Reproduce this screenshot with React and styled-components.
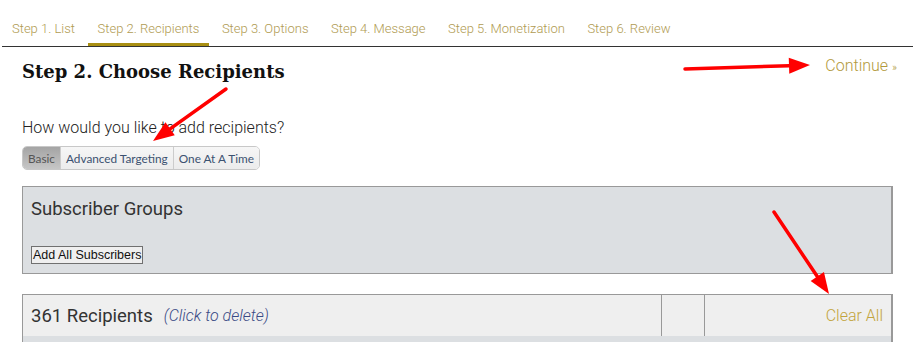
import styled, { createGlobalStyle } from "styled-components";

const GlobalStyle = createGlobalStyle`
  body {
    margin: 0;
    background: #ffffff;
    font-family: Roboto, "Liberation Sans", sans-serif;
  }
`;

const steps = [
  "Step 1. List",
  "Step 2. Recipients",
  "Step 3. Options",
  "Step 4. Message",
  "Step 5. Monetization",
  "Step 6. Review",
];

const arrows = [
  { from: [685, 69], to: [810, 65] },
  { from: [226, 89], to: [153, 141] },
  { from: [774, 212], to: [829, 294] },
];

function arrowHead(from, to, len = 21, half = 8) {
  const dx = to[0] - from[0];
  const dy = to[1] - from[1];
  const d = Math.hypot(dx, dy);
  const ux = dx / d;
  const uy = dy / d;
  const bx = to[0] - ux * len;
  const by = to[1] - uy * len;
  return {
    base: [bx, by],
    points: `${to[0]},${to[1]} ${bx - uy * half},${by + ux * half} ${bx + uy * half},${by - ux * half}`,
  };
}

export default function App() {
  return (
    <>
      <GlobalStyle />
      <Page>
        <TabBar>
          {steps.map((s, i) => (
            <Tab key={s} $active={i === 1}>{s}</Tab>
          ))}
        </TabBar>
        <Main>
          <HeaderRow>
            <Title>Step 2. Choose Recipients</Title>
            <Continue>Continue <small>»</small></Continue>
          </HeaderRow>
          <Question>How would you like to add recipients?</Question>
          <ButtonGroup>
            <ModeButton $active>Basic</ModeButton>
            <ModeButton>Advanced Targeting</ModeButton>
            <ModeButton>One At A Time</ModeButton>
          </ButtonGroup>
          <GroupsPanel>
            <PanelTitle>Subscriber Groups</PanelTitle>
            <AddButton type="button">Add All Subscribers</AddButton>
          </GroupsPanel>
          <RecipientsPanel>
            <RecipientsHead>
              <Cell>
                <Count>361 Recipients</Count>
                <Hint>(Click to delete)</Hint>
              </Cell>
              <Cell $border />
              <Cell $border $right>
                <ClearAll>Clear All</ClearAll>
              </Cell>
            </RecipientsHead>
            <RecipientsBody />
          </RecipientsPanel>
        </Main>
        <Overlay width="919" height="342" viewBox="0 0 919 342">
          {arrows.map((a, i) => {
            const h = arrowHead(a.from, a.to);
            return (
              <g key={i}>
                <line
                  x1={a.from[0]}
                  y1={a.from[1]}
                  x2={h.base[0]}
                  y2={h.base[1]}
                  stroke="#ff0000"
                  strokeWidth="3.5"
                  strokeLinecap="round"
                />
                <polygon points={h.points} fill="#ff0000" />
              </g>
            );
          })}
        </Overlay>
      </Page>
    </>
  );
}

const Page = styled.div`
  position: relative;
  width: 919px;
  height: 342px;
  overflow: hidden;
`;

const TabBar = styled.div`
  display: flex;
  gap: 2.5px;
  margin: 0 6px 0 2px;
  padding-top: 19px;
  border-bottom: 1px solid #333333;
`;

const Tab = styled.div`
  padding: 0 10px 4px;
  line-height: 20px;
  font-size: 13px;
  font-weight: 300;
  color: #b09b52;
  border-bottom: 3px solid ${(p) => (p.$active ? "#a98f12" : "transparent")};
`;

const Main = styled.div`
  padding: 0 26px 0 22px;
`;

const HeaderRow = styled.div`
  display: flex;
  justify-content: space-between;
  align-items: flex-start;
  margin-top: 12px;
`;

const Title = styled.h1`
  margin: 0;
  font-family: "DejaVu Serif", "Liberation Serif", serif;
  font-size: 18px;
  font-weight: bold;
  line-height: 26px;
  color: #111111;
`;

const Continue = styled.a`
  margin-right: -4px;
  font-size: 16px;
  font-weight: 300;
  line-height: 14px;
  color: #b39a3c;
  small {
    font-size: 11px;
  }
`;

const Question = styled.p`
  margin: 33px 0 0;
  font-size: 16px;
  font-weight: 300;
  line-height: 20px;
  color: #222222;
`;

const ButtonGroup = styled.div`
  display: inline-flex;
  box-sizing: border-box;
  margin-top: 8px;
  height: 24px;
  border: 1px solid #c8c8c8;
  border-radius: 5px;
  overflow: hidden;
`;

const ModeButton = styled.div`
  display: flex;
  align-items: center;
  padding: 0 5px;
  font-family: Lato, "Liberation Sans", sans-serif;
  font-size: 11.8px;
  color: ${(p) => (p.$active ? "#555555" : "#3b5170")};
  background: ${(p) =>
    p.$active
      ? "linear-gradient(#a4a4a4, #c6c6c6)"
      : "linear-gradient(#f6f6f6, #ececec)"};
  & + & {
    border-left: 1px solid #cccccc;
  }
`;

const GroupsPanel = styled.div`
  margin-top: 16px;
  padding: 10px 8px 9px;
  background: #dcdfe2;
  border: 1px solid #999999;
  border-right-width: 2px;
`;

const PanelTitle = styled.div`
  font-size: 18.5px;
  line-height: 24px;
  color: #333333;
`;

const AddButton = styled.button`
  display: block;
  margin-top: 25px;
  height: 18px;
  padding: 0 1px;
  font-family: "Liberation Sans", Arial, sans-serif;
  font-size: 12.5px;
  color: #111111;
  background: #efefef;
  border: 1px solid #707070;
  border-radius: 0;
`;

const RecipientsPanel = styled.div`
  margin-top: 20px;
  border: 1px solid #999999;
  border-right-width: 2px;
  border-bottom: none;
`;

const RecipientsHead = styled.div`
  display: grid;
  grid-template-columns: 1fr 43px 187px;
  height: 41px;
  background: #efefef;
`;

const Cell = styled.div`
  display: flex;
  align-items: center;
  justify-content: ${(p) => (p.$right ? "flex-end" : "flex-start")};
  gap: 11px;
  padding: 0 8px 0 8px;
  border-left: ${(p) => (p.$border ? "1px solid #999999" : "none")};
`;

const Count = styled.span`
  font-size: 18.5px;
  color: #333333;
`;

const Hint = styled.span`
  font-size: 16px;
  font-style: italic;
  font-weight: 300;
  color: #3a4a85;
`;

const ClearAll = styled.a`
  font-size: 16px;
  font-weight: 300;
  color: #c2a43c;
`;

const RecipientsBody = styled.div`
  height: 20px;
  background: #dcdfe2;
`;

const Overlay = styled.svg`
  position: absolute;
  left: 0;
  top: 0;
  pointer-events: none;
`;
